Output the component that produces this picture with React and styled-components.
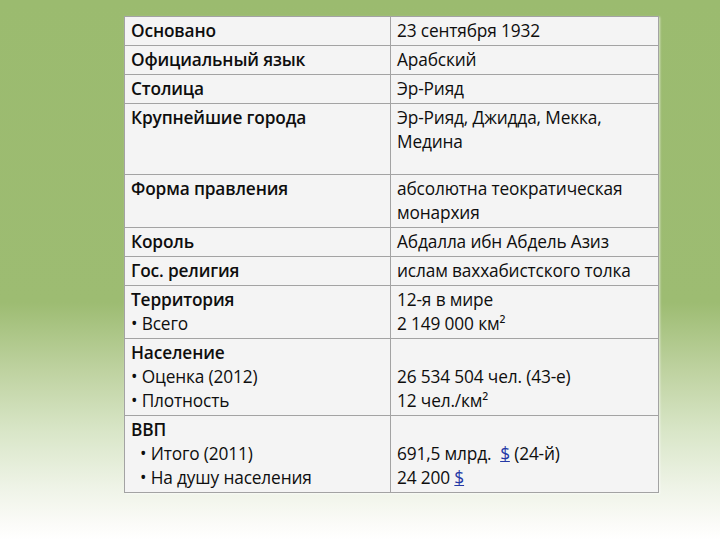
import React from 'react'
import styled, { createGlobalStyle } from 'styled-components'

const GlobalStyle = createGlobalStyle`
  html, body {
    margin: 0;
    padding: 0;
  }
  body {
    font-family: "Open Sans", Lato, "Liberation Sans", sans-serif;
  }
`

// page with the green slide background
const Page = styled.div`
  width: 720px;
  height: 540px;
  box-sizing: border-box;
  padding: 16px 0 0 124px;
  background: linear-gradient(
    to bottom,
    #9bbb6f 0%,
    #9dbc72 56%,
    #bdd19e 68%,
    #d9e6c8 80%,
    #eef3e6 90%,
    #fbfbf8 97%,
    #ffffff 100%
  );
`

const Table = styled.table`
  width: 535px;
  border-collapse: collapse;
  background: #f4f4f4;
  box-shadow: 1px 1px 2px rgba(255, 255, 255, 0.6);
  color: #0e0e0e;
  font-size: 17.3px;
  line-height: 24px;
  letter-spacing: -0.15px;
`

const Cell = styled.td`
  border: 1px solid #a3a3a3;
  padding: 2px 6px ${(p) => (p.tall ? '20px' : '2px')} 6px;
  vertical-align: top;
  white-space: nowrap;
  width: ${(p) => (p.first ? '253px' : 'auto')};
`

const Label = styled.div`
  font-weight: 600;
`

const Item = styled.div`
  padding-left: ${(p) => (p.deep ? '9px' : '0')};
`

const Money = styled.span`
  color: #2438a6;
  text-decoration: underline;
`

const rows = [
  { label: 'Основано', value: ['23 сентября 1932'] },
  { label: 'Официальный язык', value: ['Арабский'] },
  { label: 'Столица', value: ['Эр-Рияд'] },
  { label: 'Крупнейшие города', value: ['Эр-Рияд, Джидда, Мекка,', 'Медина'], tall: true },
  { label: 'Форма правления', value: ['абсолютна теократическая', 'монархия'] },
  { label: 'Король', value: ['Абдалла ибн Абдель Азиз'] },
  { label: 'Гос. религия', value: ['ислам ваххабистского толка'] },
  { label: 'Территория', items: ['• Всего'], value: ['12-я в мире', '2 149 000 км²'] },
  {
    label: 'Население',
    items: ['• Оценка (2012)', '• Плотность'],
    value: ['\u00a0', '26 534 504 чел. (43-е)', '12 чел./км²'],
  },
]

const App = () => {
  return (
    <Page>
      <GlobalStyle />
      <Table>
        <tbody>
          {rows.map((r) => (
            <tr key={r.label}>
              <Cell first tall={r.tall}>
                <Label>{r.label}</Label>
                {r.items && r.items.map((it) => <Item key={it}>{it}</Item>)}
              </Cell>
              <Cell tall={r.tall}>
                {r.value.map((v, i) => (
                  <div key={i}>{v}</div>
                ))}
              </Cell>
            </tr>
          ))}
          <tr>
            <Cell first>
              <Label>ВВП</Label>
              <Item deep>• Итого (2011)</Item>
              <Item deep>• На душу населения</Item>
            </Cell>
            <Cell>
              <div>&nbsp;</div>
              <div>
                691,5 млрд.&nbsp;&nbsp;<Money>$</Money> (24-й)
              </div>
              <div>
                24 200 <Money>$</Money>
              </div>
            </Cell>
          </tr>
        </tbody>
      </Table>
    </Page>
  )
}

export default App
